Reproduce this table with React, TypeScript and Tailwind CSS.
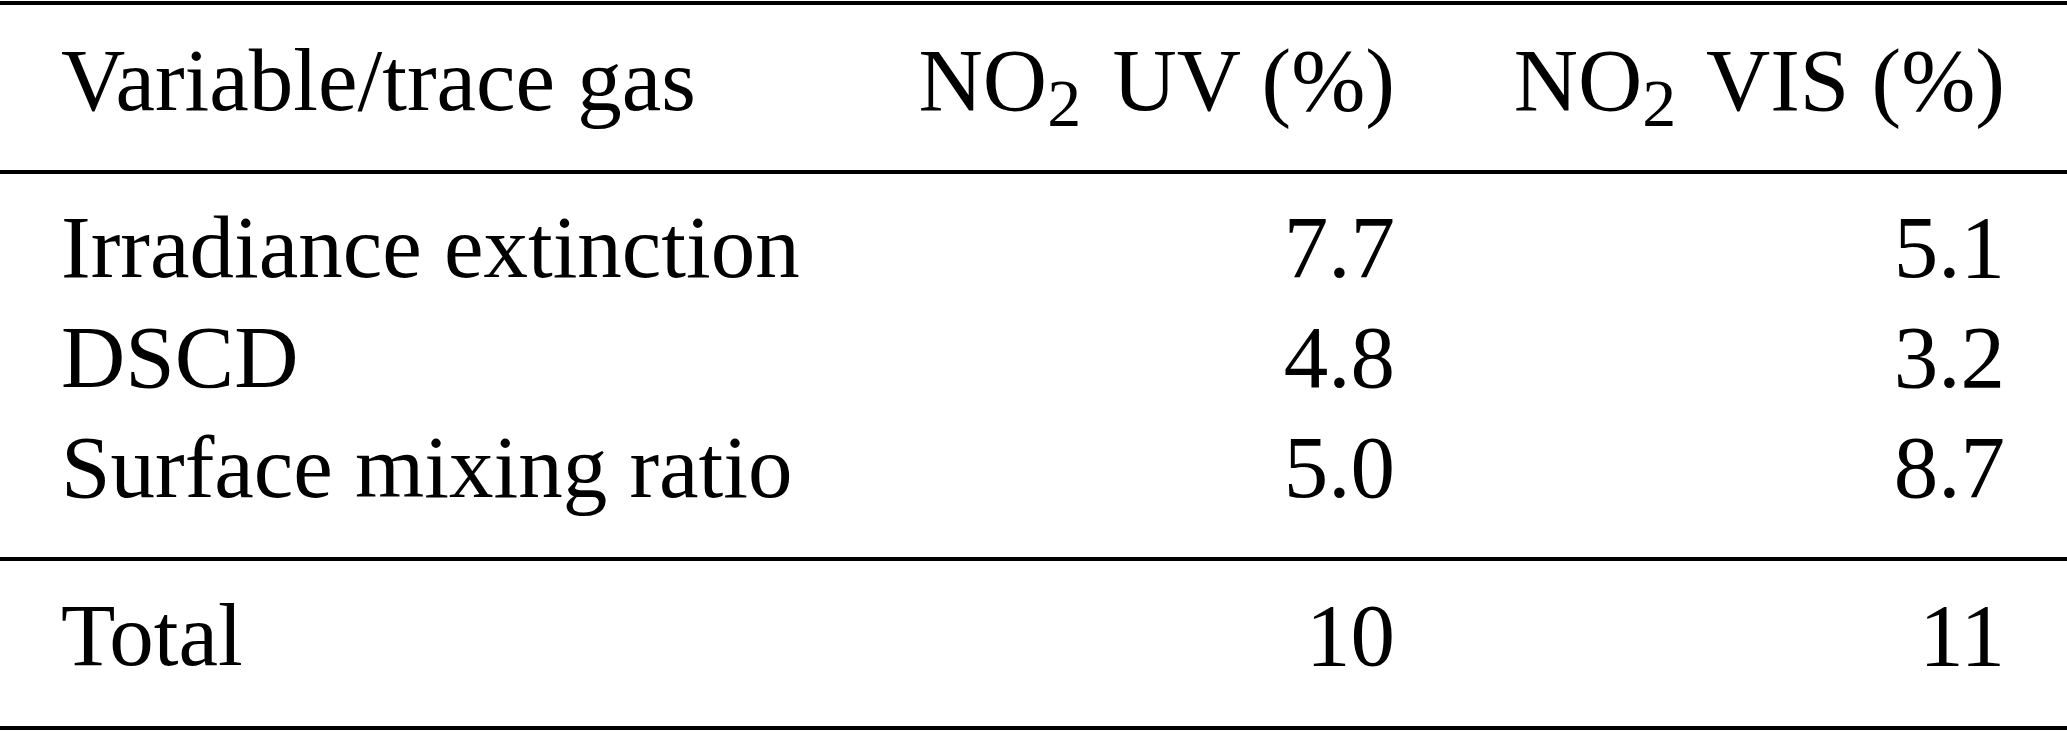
import React from 'react';

const rows = [
  { label: 'Irradiance extinction', uv: '7.7', vis: '5.1' },
  { label: 'DSCD', uv: '4.8', vis: '3.2' },
  { label: 'Surface mixing ratio', uv: '5.0', vis: '8.7' },
];

const Row: React.FC<{ cells: React.ReactNode[] }> = ({ cells }) => (
  <div className="grid grid-cols-[1fr_500px_610px] pl-[61px] pr-[62px] whitespace-nowrap">
    <div>{cells[0]}</div>
    <div className="text-right">{cells[1]}</div>
    <div className="text-right">{cells[2]}</div>
  </div>
);

const NO2: React.FC = () => (
  <>
    NO<span className="relative top-[16px] text-[68px] leading-none mr-[9px]">2</span>
  </>
);

export default function App() {
  return (
    <div className="w-[2067px] h-[731px] bg-white text-black font-['Liberation_Serif','Times_New_Roman',serif] text-[89px] leading-[110px] pt-px">
      {/* header */}
      <div className="border-t-4 border-b-4 border-black pt-[20px] pb-[35px]">
        <Row
          cells={[
            'Variable/trace gas',
            <><NO2 /> UV (%)</>,
            <><NO2 /> VIS (%)</>,
          ]}
        />
      </div>

      {/* body */}
      <div className="border-b-4 border-black pt-[18px] pb-[35px]">
        {rows.map((r) => (
          <Row key={r.label} cells={[r.label, r.uv, r.vis]} />
        ))}
      </div>

      {/* total */}
      <div className="border-b-4 border-black pt-[19px] pb-[36px]">
        <Row cells={['Total', '10', '11']} />
      </div>
    </div>
  );
}
